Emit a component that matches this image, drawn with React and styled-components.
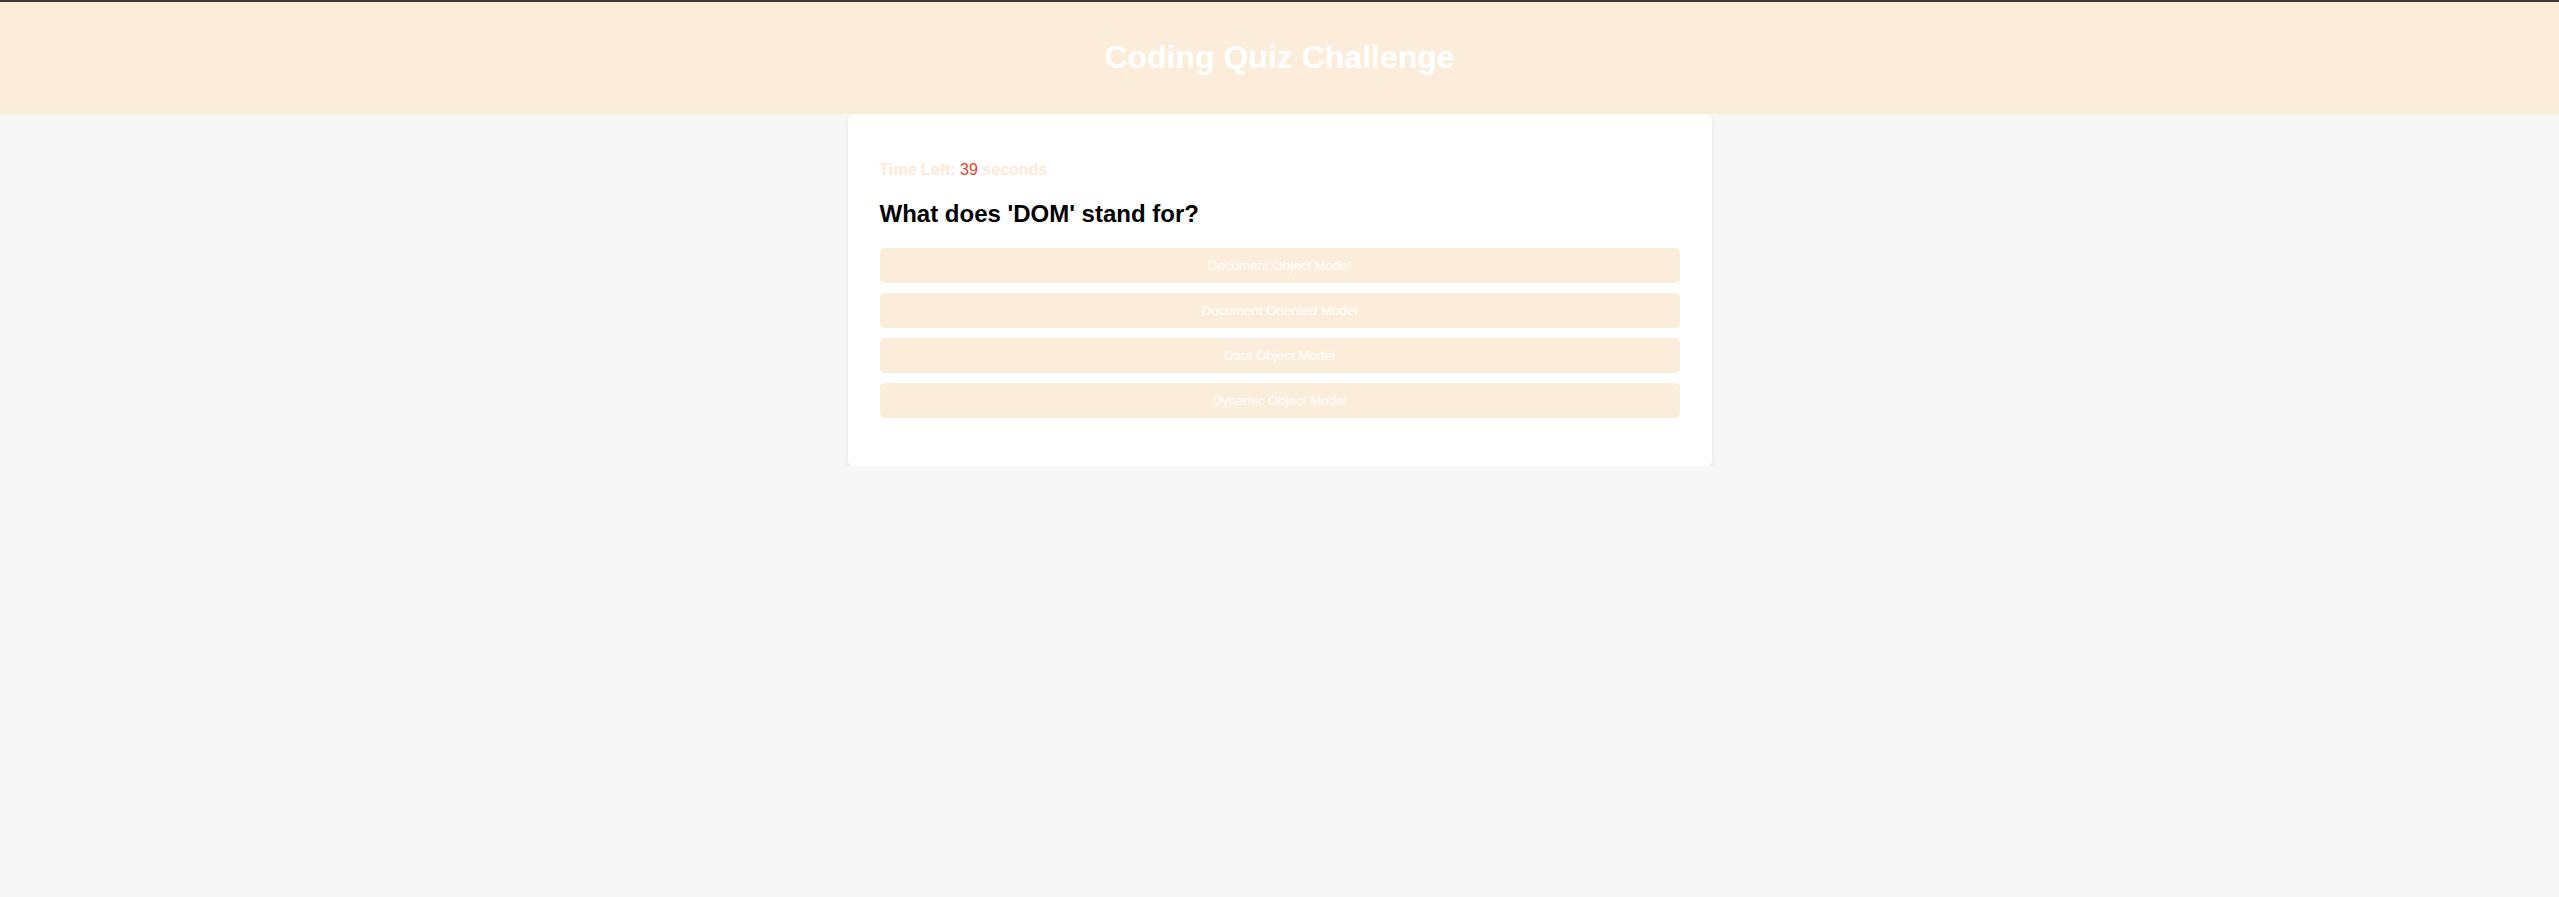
import React from 'react';
import styled, { createGlobalStyle } from 'styled-components';

const GlobalStyle = createGlobalStyle`
  html, body {
    margin: 0;
    padding: 0;
    background-color: #f7f7f7;
    font-family: 'Liberation Sans', Arial, sans-serif;
  }
`;

const Header = styled.header`
  box-sizing: border-box;
  background-color: #fcedda;
  border-top: 2px solid #3b3a38;
  height: 114px;
  padding-bottom: 2px;
  display: flex;
  align-items: center;
  justify-content: center;
`;

const Title = styled.h1`
  margin: 0;
  color: #fff;
  font-size: 32px;
  font-weight: 700;
`;

const Card = styled.main`
  box-sizing: border-box;
  width: 864px;
  margin: 0 auto;
  padding: 32px 32px 48px;
  background-color: #fff;
  border-radius: 5px;
  box-shadow: 0 2px 5px rgba(0, 0, 0, 0.09);
`;

const Timer = styled.p`
  margin: 15px 0 0;
  font-size: 16px;
  font-weight: 700;
  color: #fde9d7;
`;

const Seconds = styled.span`
  color: #f03c2a;
  font-weight: 400;
`;

const Question = styled.h2`
  margin: 21px 0 20px;
  font-size: 24px;
  font-weight: 700;
  color: #000;
`;

const Choices = styled.div`
  display: flex;
  flex-direction: column;
  gap: 10px;
`;

const Choice = styled.button`
  height: 35px;
  border: none;
  border-radius: 5px;
  background-color: #fcedda;
  color: #fff;
  font-family: 'Liberation Sans', Arial, sans-serif;
  font-size: 13.333px;
  cursor: pointer;
`;

const choices = [
  'Document Object Model',
  'Document Oriented Model',
  'Data Object Model',
  'Dynamic Object Model',
];

export default function App() {
  return (
    <>
      <GlobalStyle />
      <Header>
        <Title>Coding Quiz Challenge</Title>
      </Header>
      <Card>
        <Timer>
          Time Left: <Seconds>39</Seconds> seconds
        </Timer>
        <Question>What does 'DOM' stand for?</Question>
        <Choices>
          {choices.map((c) => (
            <Choice key={c}>{c}</Choice>
          ))}
        </Choices>
      </Card>
    </>
  );
}
